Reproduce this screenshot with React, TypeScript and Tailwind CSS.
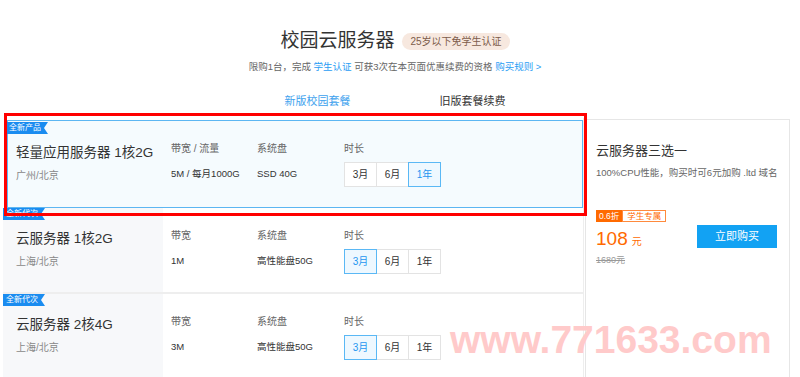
import React from 'react';

type Plan = {
  tag: string;
  name: string;
  area: string;
  bwLabel: string;
  bw: string;
  disk: string;
  active: number;
  highlight?: boolean;
};

const plans: Plan[] = [
  { tag: '全新产品', name: '轻量应用服务器 1核2G', area: '广州/北京', bwLabel: '带宽 / 流量', bw: '5M / 每月1000G', disk: 'SSD 40G', active: 2, highlight: true },
  { tag: '全新代次', name: '云服务器 1核2G', area: '上海/北京', bwLabel: '带宽', bw: '1M', disk: '高性能盘50G', active: 0 },
  { tag: '全新代次', name: '云服务器 2核4G', area: '上海/北京', bwLabel: '带宽', bw: '3M', disk: '高性能盘50G', active: 0 },
];

const durations = ['3月', '6月', '1年'];

function Tag({ text }: { text: string }) {
  return (
    <div className="flex h-[12px] w-[42px] items-center bg-[#1a8cf0] pl-[3px] text-[8px] leading-none text-white [clip-path:polygon(0_0,100%_0,calc(100%-4px)_50%,100%_100%,0_100%)]">
      {text}
    </div>
  );
}

function PlanCard({ plan }: { plan: Plan }) {
  const hl = plan.highlight;
  return (
    <div
      className={`relative flex ${
        hl
          ? 'ml-[4px] mt-[2px] h-[88px] border border-[#5cb6f2] bg-[#f5fbfe]'
          : 'h-[86px] border-b-2 border-[#eeeeee] bg-white'
      }`}
    >
      <div className={`absolute ${hl ? 'left-[-2px] top-[1px]' : 'left-0 top-0'}`}>
        <Tag text={plan.tag} />
      </div>
      <div className={`flex flex-col ${hl ? 'w-[155px] pl-[8px] pt-[23px]' : 'w-[160px] bg-[#f7f8fa] pl-[13px] pt-[22px]'}`}>
        <div className="text-[13.5px] leading-[18px] text-[#333]">{plan.name}</div>
        <div className="mt-[7px] text-[10px] leading-[14px] text-[#888]">{plan.area}</div>
      </div>
      <div className={`flex pl-[8px] ${hl ? 'pt-[21px]' : 'pt-[21px]'}`}>
        <div className="w-[86px]">
          <div className="text-[10px] leading-[14px] text-[#666]">{plan.bwLabel}</div>
          <div className="mt-[11px] text-[9.5px] leading-[14px] text-[#333]">{plan.bw}</div>
        </div>
        <div className="w-[87px]">
          <div className="text-[10px] leading-[14px] text-[#666]">系统盘</div>
          <div className="mt-[11px] text-[9.5px] leading-[14px] text-[#333]">{plan.disk}</div>
        </div>
        <div>
          <div className="text-[10px] leading-[14px] text-[#666]">时长</div>
          <div className="mt-[6px] flex">
            {durations.map((d, i) => (
              <div
                key={d}
                className={`relative -ml-px first:ml-0 flex h-[25px] w-[33px] items-center justify-center border text-[10px] ${
                  i === plan.active
                    ? 'z-10 border-[#5ab8f5] bg-[#eef8ff] text-[#2596f0]'
                    : 'border-[#e3e3e3] bg-white text-[#333]'
                }`}
              >
                {d}
              </div>
            ))}
          </div>
        </div>
      </div>
    </div>
  );
}

export default function App() {
  return (
    <div className="relative h-[377px] w-[800px] overflow-hidden bg-white font-['Liberation_Sans','Noto_Sans_CJK_SC',sans-serif]">
      {/* header */}
      <div className="flex h-[118px] flex-col items-center">
        <div className="mt-[28px] flex h-[26px] items-center pr-[10px]">
          <span className="text-[19px] text-[#333]">校园云服务器</span>
          <span className="ml-[8px] flex h-[17px] items-center rounded-full bg-[#f7e8df] px-[8px] text-[10px] text-[#7d5c4a]">
            25岁以下免学生认证
          </span>
        </div>
        <div className="mt-[6px] pr-[10px] text-[9.5px] leading-[14px] text-[#666]">
          限购1台，完成 <span className="text-[#2a9df4]">学生认证</span> 可获3次在本页面优惠续费的资格{' '}
          <span className="text-[#2a9df4]">购买规则 &gt;</span>
        </div>
        <div className="mt-[19px] flex pr-[10px] text-[11px] leading-[16px]">
          <div className="w-[155px] text-center text-[#3ea2ee]">新版校园套餐</div>
          <div className="w-[155px] text-center text-[#333]">旧版套餐续费</div>
        </div>
      </div>

      {/* body */}
      <div className="flex items-start">
        <div className="ml-[3px] w-[581px] border-r border-[#eeeeee]">
          {plans.map((p) => (
            <PlanCard key={p.name} plan={p} />
          ))}
        </div>

        <div className="ml-[1px] mt-[1px] h-[270px] w-[205px] border border-[#e6e6e6] pl-[10px] pr-[12px] pt-[22px]">
          <div className="text-[13px] leading-[18px] text-[#333]">云服务器三选一</div>
          <div className="mt-[6px] whitespace-nowrap text-[9.5px] leading-[14px] text-[#666]">
            100%CPU性能，购买时可6元加购 .ltd 域名
          </div>
          <div className="mt-[30px] flex h-[12px] text-[8.5px] leading-none">
            <span className="flex items-center bg-[#ff6a00] px-[3px] text-white">0.6折</span>
            <span className="flex items-center border border-[#ff8a3d] px-[4px] text-[#ff6a00]">学生专属</span>
          </div>
          <div className="mt-[3px] flex items-start justify-between">
            <div>
              <div className="mt-[3px] flex items-baseline leading-[22px] text-[#ff6a00]">
                <span className="text-[19px]">108</span>
                <span className="ml-[4px] text-[10px]">元</span>
              </div>
              <div className="mt-[1px] text-[9px] leading-[12px] text-[#999] line-through">1680元</div>
            </div>
            <div className="flex h-[23px] w-[80px] items-center justify-center bg-[#12a2f3] text-[11px] text-white">
              立即购买
            </div>
          </div>
        </div>
      </div>

      {/* annotation overlay */}
      <div className="pointer-events-none absolute left-[4px] top-[113px] h-[103px] w-[583px] border-[3px] border-[#ff0000]" />

      {/* watermark */}
      <div className="pointer-events-none absolute left-[450px] top-[320px] text-[39px] font-bold leading-none text-[#ffcaca]">
        www.771633.com
      </div>
    </div>
  );
}
